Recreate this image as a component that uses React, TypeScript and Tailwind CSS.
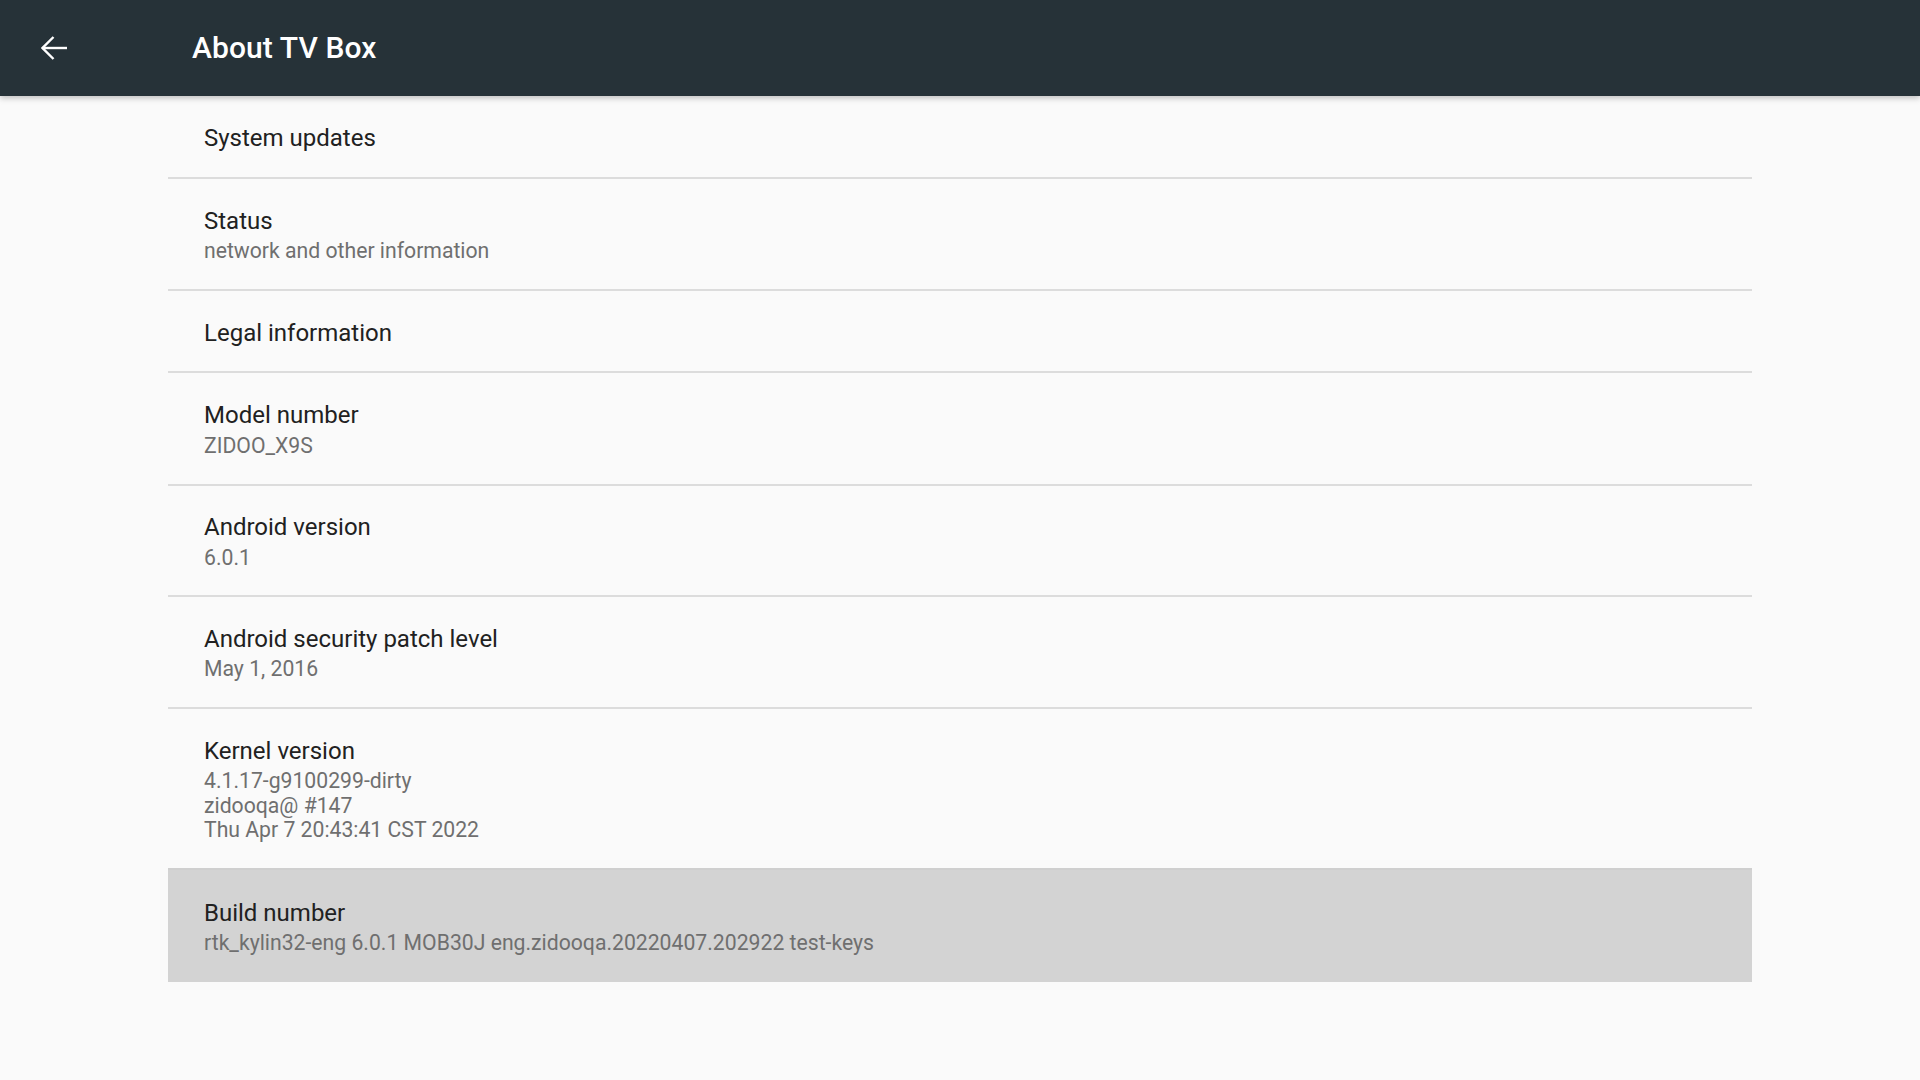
import React from "react";

type Item = { title: string; sub?: string[]; h: string; highlight?: boolean; border?: boolean };

const items: Item[] = [
  { title: "System updates", h: "h-[83px]", border: true },
  { title: "Status", sub: ["network and other information"], h: "h-[112px]", border: true },
  { title: "Legal information", h: "h-[82px]", border: true },
  { title: "Model number", sub: ["ZIDOO_X9S"], h: "h-[113px]", border: true },
  { title: "Android version", sub: ["6.0.1"], h: "h-[111px]", border: true },
  { title: "Android security patch level", sub: ["May 1, 2016"], h: "h-[112px]", border: true },
  {
    title: "Kernel version",
    sub: ["4.1.17-g9100299-dirty", "zidooqa@ #147", "Thu Apr 7 20:43:41 CST 2022"],
    h: "h-[159px]",
    border: false,
  },
  {
    title: "Build number",
    sub: ["rtk_kylin32-eng 6.0.1 MOB30J eng.zidooqa.20220407.202922 test-keys"],
    h: "h-[114px]",
    highlight: true,
    border: false,
  },
];

export default function App() {
  return (
    <div className="w-[1920px] h-[1080px] bg-[#fafafa] overflow-hidden font-['Roboto',sans-serif]">
      <div className="relative z-10 h-[96px] bg-[#263238] flex items-center shadow-[0_2px_6px_rgba(0,0,0,0.25)]">
        <div className="w-[192px] flex items-center pl-[41px]">
          <svg width="27" height="24" viewBox="0 0 27 24" fill="none" stroke="white" strokeWidth="2.4" strokeLinecap="butt" strokeLinejoin="miter">
            <path d="M1.5 12H26" />
            <path d="M12.5 1L1.5 12L12.5 23" />
          </svg>
        </div>
        <div className="text-white text-[30px] font-medium leading-none tracking-[0.1px]">About TV Box</div>
      </div>
      <div className="ml-[168px] w-[1584px]">
        {items.map((it) => (
          <div
            key={it.title}
            className={`${it.h} flex flex-col justify-center pl-[36px] ${
              it.border ? "border-b-2 border-[#dcdcdc]" : ""
            } ${it.sub ? "pt-[1px]" : "pt-[3px]"} ${it.highlight ? "bg-[#d3d3d3] border-t-2 border-[#cfcfcf]" : ""}`}
          >
            <div className="text-[24px] leading-[30px] text-[#212121]">{it.title}</div>
            {it.sub && (
              <div className="mt-[3.5px]">
                {it.sub.map((s) => (
                  <div key={s} className="text-[21.2px] leading-[24.5px] text-[#6f6f6f]">
                    {s}
                  </div>
                ))}
              </div>
            )}
          </div>
        ))}
      </div>
    </div>
  );
}
